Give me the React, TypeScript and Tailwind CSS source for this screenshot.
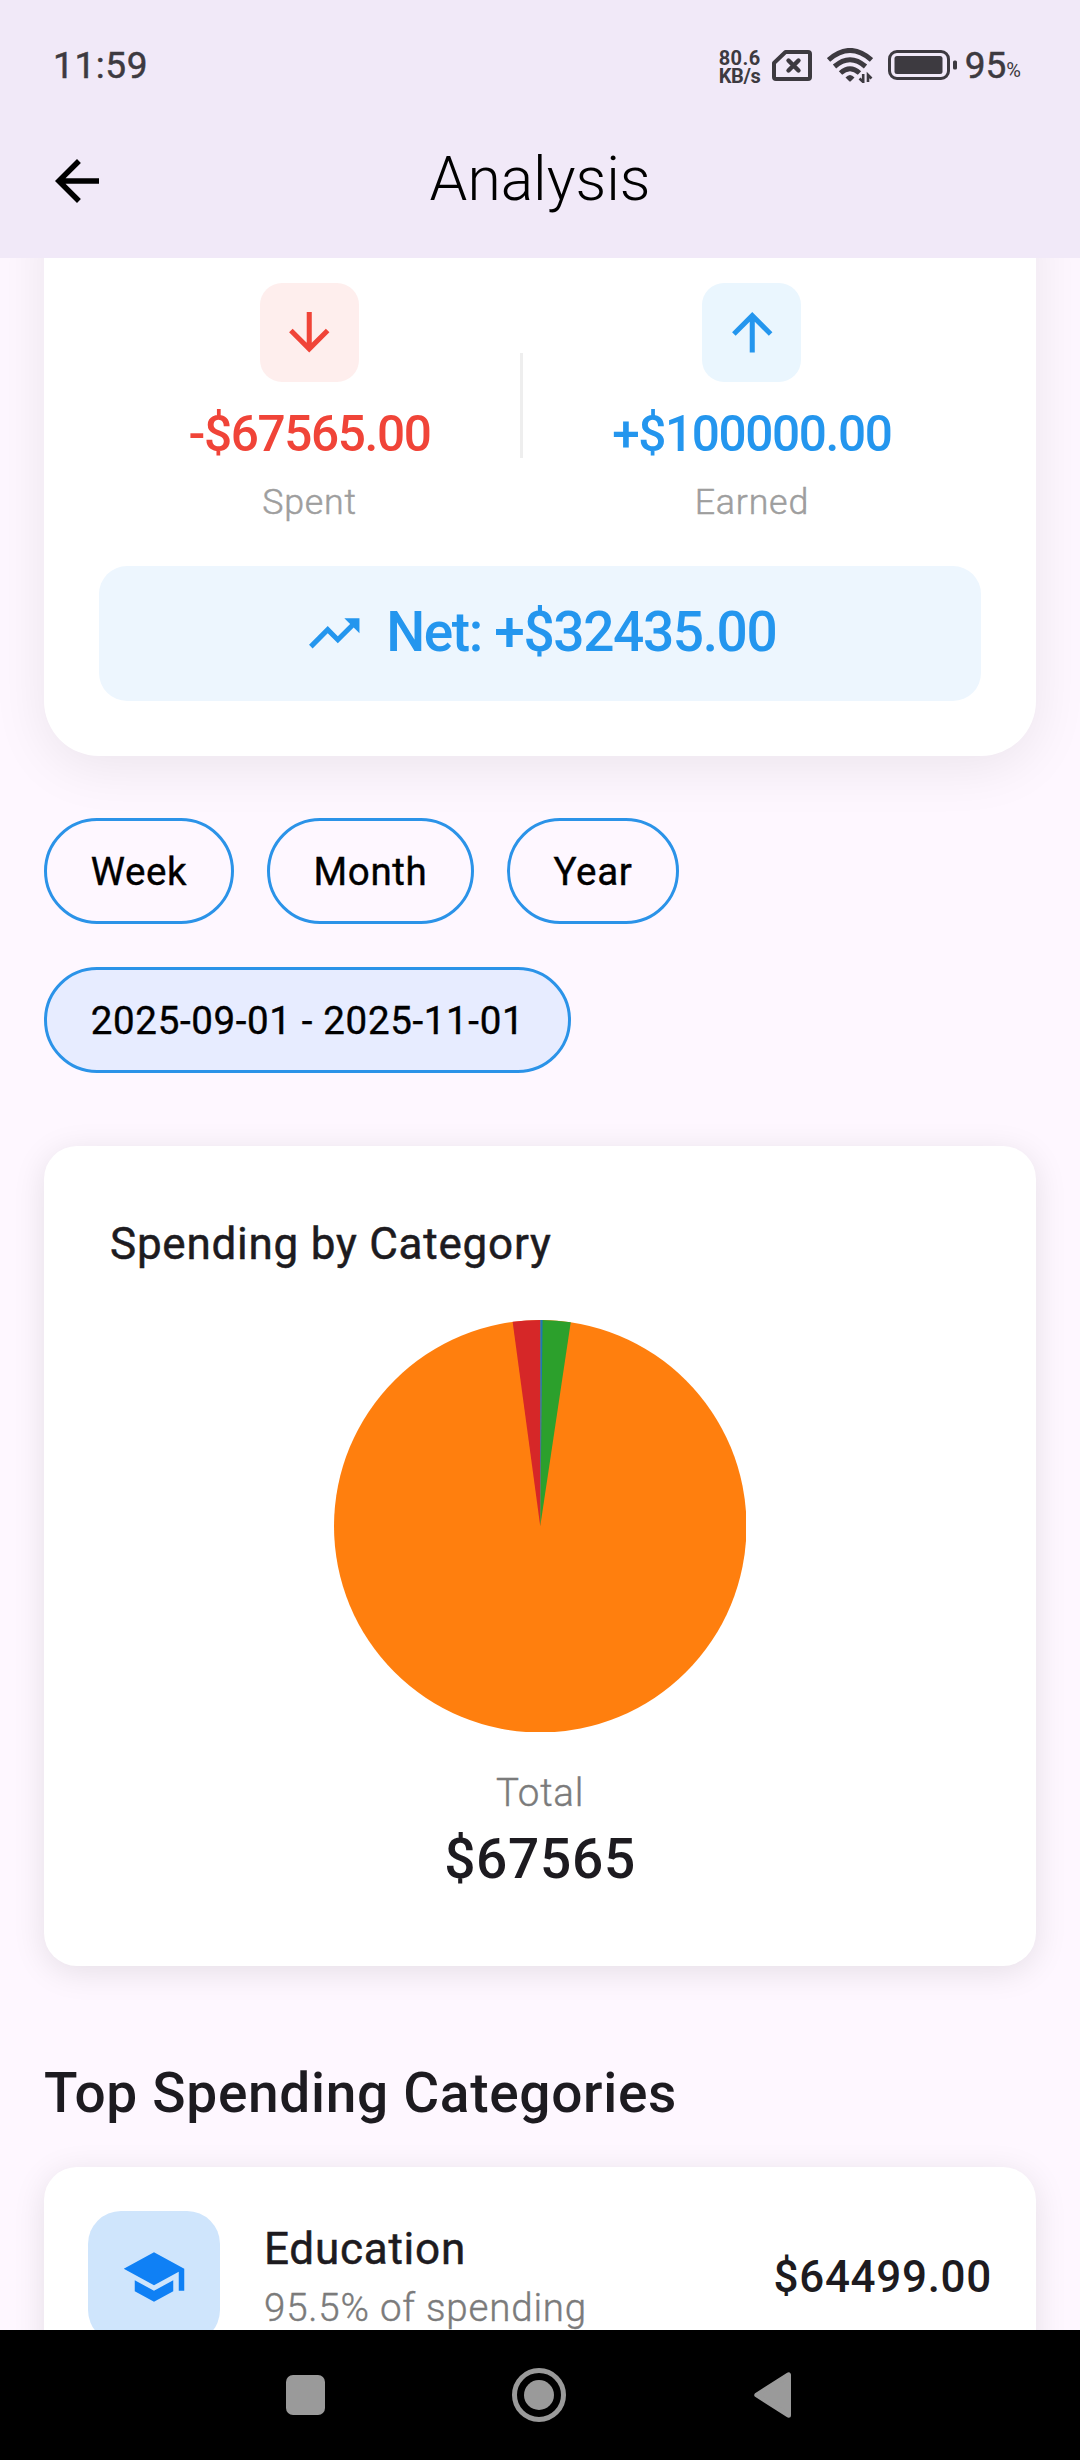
import type { ReactNode } from 'react';

const CENTER = 206.25;

function point(deg: number) {
  const a = (deg * Math.PI) / 180;
  return `${CENTER + CENTER * Math.sin(a)} ${CENTER - CENTER * Math.cos(a)}`;
}

function Slice({ from, to, color }: { from: number; to: number; color: string }) {
  const large = to - from > 180 ? 1 : 0;
  return (
    <path
      d={`M${CENTER} ${CENTER}L${point(from)}A${CENTER} ${CENTER} 0 ${large} 1 ${point(to)}Z`}
      fill={color}
    />
  );
}

function Icon({ d, className }: { d: string; className: string }) {
  return (
    <svg viewBox="0 0 24 24" className={className} fill="currentColor">
      <path d={d} />
    </svg>
  );
}

function StatusBar() {
  return (
    <div className="flex h-[130px] items-center pl-[53px] pr-[59px] text-[#3d3a40]">
      <span className="mt-[1px] text-[37px] leading-[44px] tracking-[0.6px] [-webkit-text-stroke:0.5px]">11:59</span>
      <div className="ml-auto flex items-center">
        <div className="mt-[4px] w-[53px] text-[20px] leading-[18px] font-bold">
          <div className="tracking-[0.4px]">80.6</div>
          <div className="tracking-[-0.4px]">KB/s</div>
        </div>
        <svg width="40" height="31" viewBox="0 0 40 31" fill="none" stroke="currentColor" strokeWidth="4">
          <path d="M13.5 2H36Q38 2 38 4V27Q38 29 36 29H4Q2 29 2 27V13Z" strokeLinejoin="round" />
          <path d="M16.500 10.500L26.500 20.500M26.500 10.500L16.500 20.500" strokeWidth="4.400" strokeLinecap="round" />
        </svg>
        <svg className="ml-[15px]" width="46" height="35" viewBox="0 0 46 35" fill="none" stroke="currentColor" strokeWidth="5">
          <path d="M1.500 12Q23 -7 44.500 12" />
          <path d="M7.500 18.500Q23 5 38.500 18.500" />
          <path d="M13.500 25Q23 16.500 32.500 25" />
          <path d="M18.500 29.500Q23 24.500 27.500 29.500L23.500 33.500H22.500Z" fill="currentColor" stroke="none" />
          <path d="M36.200 26V34L32.500 30.500M41 34V27L44.500 30.500" strokeWidth="2.600" />
        </svg>
        <svg className="ml-[15px]" width="69" height="30" viewBox="0 0 69 30" fill="none" stroke="currentColor">
          <rect x="1.500" y="1.500" width="59" height="27" rx="7.500" strokeWidth="3" />
          <rect x="6.500" y="6" width="48" height="18" rx="2.500" fill="currentColor" stroke="none" />
          <rect x="65" y="10.500" width="4" height="9" rx="1.500" fill="currentColor" stroke="none" />
        </svg>
        <span className="mt-[1px] ml-[8px] text-[37px] leading-[44px] [-webkit-text-stroke:0.5px]">95</span>
        <span className="mt-[9px] text-[20px] leading-[24px]">%</span>
      </div>
    </div>
  );
}

function Header() {
  return (
    <header className="h-[258px] shrink-0 bg-[#f1e9f8]">
      <StatusBar />
      <div className="grid h-[101px] grid-cols-[1fr_auto_1fr] items-center px-[44px]">
        <Icon className="size-[66px] text-black" d="M20 11H7.830l5.590-5.590L12 4l-8 8 8 8 1.410-1.410L7.830 13H20v-2z" />
        <h1 className="mb-[2px] text-[60.500px] leading-[72px] font-light text-black">Analysis</h1>
      </div>
    </header>
  );
}

function Stat({ icon, tile, color, amount, label }: { icon: string; tile: string; color: string; amount: string; label: string }) {
  return (
    <div className={`flex flex-col items-center ${color}`}>
      <div className={`flex size-[99px] items-center justify-center rounded-[22px] ${tile}`}>
        <Icon className="size-[60.500px]" d={icon} />
      </div>
      <div className="mt-[23px] text-[49.500px] leading-[58px] font-medium tracking-[-1.375px] whitespace-nowrap">{amount}</div>
      <div className="mt-[18px] text-[35.750px] leading-[42px] font-light tracking-[0.8px] text-[#9e9e9e] [-webkit-text-stroke:0.5px]">{label}</div>
    </div>
  );
}

function SummaryCard() {
  return (
    <section className="-mt-[60px] rounded-b-[55px] bg-white px-[55px] pt-[85px] pb-[55px] shadow-[0_11px_55px_rgba(0,0,0,0.080)]">
      <div className="flex h-[283px]">
        <div className="w-[421px]">
          <Stat
            icon="M20 12l-1.410-1.410L13 16.170V4h-2v12.170l-5.580-5.590L4 12l8 8 8-8z"
            tile="bg-[#feeeed]"
            color="text-[#f04438]"
            amount="-$67565.00"
            label="Spent"
          />
        </div>
        <div className="mt-[70px] h-[104.500px] w-[2.750px] bg-[#eeeeee]" />
        <div className="flex-1">
          <Stat
            icon="M4 12l1.410 1.410L11 7.830V20h2V7.830l5.580 5.590L20 12l-8-8-8 8z"
            tile="bg-[#eaf6fe]"
            color="text-[#2496ee]"
            amount="+$100000.00"
            label="Earned"
          />
        </div>
      </div>
      <div className="flex h-[135px] items-center justify-center gap-[22px] rounded-[28px] bg-[#edf6fe] text-[#2496ee]">
        <Icon className="size-[60.500px]" d="M16 6l2.290 2.290-4.880 4.880-4-4L2 16.590 3.410 18l6-6 4 4 6.300-6.290L22 12V6z" />
        <span className="mb-[3px] text-[55px] leading-[64px] font-medium tracking-[-1.375px]">Net: +$32435.00</span>
      </div>
    </section>
  );
}

function Chip({ children, width, selected }: { children: ReactNode; width: string; selected?: boolean }) {
  return (
    <button
      className={`flex h-[106px] items-center justify-center rounded-full border-[3px] border-[#2b93e8] pt-px text-[38.500px] leading-[46px] tracking-[0.65px] text-black [-webkit-text-stroke:0.4px] ${width} ${selected ? 'bg-[#e7ecff]' : ''}`}
    >
      {children}
    </button>
  );
}

function PieCard() {
  return (
    <section className="mt-[73px] flex h-[820px] flex-col items-center rounded-[33px] bg-white shadow-[0_6px_33px_rgba(0,0,0,0.100)]">
      <h2 className="mt-[72px] ml-[66px] self-start text-[44px] leading-[52px] tracking-[0.76px] [-webkit-text-stroke:0.5px]">Spending by Category</h2>
      <svg className="mt-[49.500px]" width="412.500" height="412.500" viewBox="0 0 412.500 412.500">
        <circle cx={CENTER} cy={CENTER} r={CENTER} fill="#ff7f0e" />
        <Slice from={352.3} to={360} color="#d62728" />
        <Slice from={0.500} to={8.500} color="#2ca02c" />
        <Slice from={0} to={0.650} color="#1f77b4" />
      </svg>
      <div className="mt-[38px] text-[38.500px] leading-[46px] font-light tracking-[0.75px] text-[#7b7b7b] [-webkit-text-stroke:0.4px]">Total</div>
      <div className="mt-[11px] text-[55px] leading-[64px] font-medium tracking-[0.6875px]">$67565</div>
    </section>
  );
}

function CategoryCard() {
  return (
    <section className="mt-[42px] flex h-[220px] shrink-0 rounded-[33px] bg-white p-[44px] shadow-[0_6px_33px_rgba(0,0,0,0.100)]">
      <div className="flex size-[132px] items-center justify-center rounded-[33px] bg-[#cfe5fc] text-[#0f80f5]">
        <Icon className="size-[66px]" d="M5 13.180v4L12 21l7-3.820v-4L12 17l-7-3.820zM12 3L1 9l11 6 9-4.910V17h2V9L12 3z" />
      </div>
      <div className="ml-[44px]">
        <div className="mt-[12px] text-[44px] leading-[52px] tracking-[0.76px] [-webkit-text-stroke:0.5px]">Education</div>
        <div className="mt-[10px] text-[38.500px] leading-[46px] font-light tracking-[0.8px] text-[#7b7b7b] [-webkit-text-stroke:0.4px]">95.5% of spending</div>
      </div>
      <div className="mt-[40px] ml-auto text-[44px] leading-[52px] font-medium tracking-[0.6875px]">$64499.00</div>
    </section>
  );
}

function NavBar() {
  return (
    <nav className="flex h-[130px] shrink-0 items-center bg-black pl-[286px] text-[#9a9a9a]">
      <div className="h-[40px] w-[39px] rounded-[7px] bg-current" />
      <div className="ml-[187px] flex size-[54px] items-center justify-center rounded-full border-[5px] border-current">
        <div className="size-[30px] rounded-full bg-current" />
      </div>
      <svg className="ml-[188px]" width="37" height="46" viewBox="0 0 37 46" fill="currentColor" stroke="currentColor" strokeWidth="5" strokeLinejoin="round">
        <path d="M2.800 23L34.500 2.800V43.200Z" />
      </svg>
    </nav>
  );
}

export default function App() {
  return (
    <div className="flex h-[2460px] w-[1080px] flex-col overflow-hidden bg-[#fef7ff] font-[Roboto,sans-serif] text-[#1d1b20]">
      <Header />
      <main className="h-[2072px] shrink-0 overflow-hidden px-[44px]">
        <SummaryCard />
        <div className="mt-[62px] flex gap-[33px]">
          <Chip width="w-[190px]">Week</Chip>
          <Chip width="w-[207px]">Month</Chip>
          <Chip width="w-[172px]">Year</Chip>
        </div>
        <div className="mt-[43px] flex">
          <Chip width="w-[527px]" selected>
            2025-09-01 - 2025-11-01
          </Chip>
        </div>
        <PieCard />
        <h2 className="mt-[95px] text-[55px] leading-[64px] font-medium tracking-[0.6875px]">Top Spending Categories</h2>
        <CategoryCard />
      </main>
      <NavBar />
    </div>
  );
}
